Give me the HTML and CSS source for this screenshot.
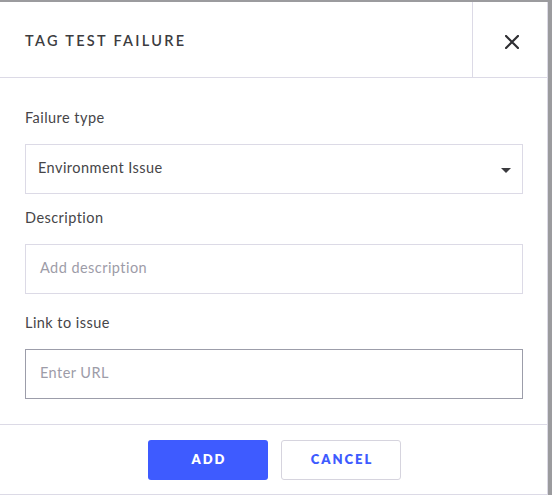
FILE: index.html
```html
<!DOCTYPE html>
<html>
<head>
<meta charset="utf-8">
<link rel="stylesheet" href="styles.css">
</head>
<body>
<div class="modal">
  <div class="modal-header">
    <div class="modal-title">TAG TEST FAILURE</div>
    <div class="close-btn">
      <svg width="14" height="14" viewBox="0 0 14 14"><path d="M1 1 L13 13 M13 1 L1 13" stroke="#2f2f33" stroke-width="2.2" stroke-linecap="square"/></svg>
    </div>
  </div>
  <div class="modal-body">
    <div class="field">
      <div class="label">Failure type</div>
      <div class="control select">
        <span class="value">Environment Issue</span>
        <span class="caret"></span>
      </div>
    </div>
    <div class="field">
      <div class="label">Description</div>
      <div class="control"><span class="placeholder">Add description</span></div>
    </div>
    <div class="field field-link">
      <div class="label">Link to issue</div>
      <div class="control focused"><span class="placeholder">Enter URL</span></div>
    </div>
  </div>
  <div class="modal-footer">
    <button class="btn btn-primary">ADD</button>
    <button class="btn btn-secondary">CANCEL</button>
  </div>
</div>
</body>
</html>
```

FILE: styles.css
```css
html, body {
  margin: 0;
  padding: 0;
}
body {
  background: #9b9b9e;
  font-family: Lato, "Open Sans", sans-serif;
  height: 495px;
  overflow: hidden;
}
.modal {
  margin-top: 2px;
  width: 547px;
  height: 492px;
  background: #fff;
  border-right: 1px solid #dcdae6;
  border-bottom: 1px solid #dcdae6;
  display: flex;
  flex-direction: column;
}
.modal-header {
  height: 75px;
  border-bottom: 1px solid #dcdae6;
  display: flex;
  align-items: stretch;
}
.modal-title {
  flex: 1;
  display: flex;
  align-items: center;
  padding-left: 25px;
  padding-top: 2px;
  font-size: 14.5px;
  font-weight: 600;
  letter-spacing: 2.3px;
  color: #3c3c40;
}
.close-btn {
  box-sizing: border-box;
  width: 75px;
  border-left: 1px solid #dcdae6;
  display: flex;
  align-items: center;
  justify-content: center;
  padding-top: 4px;
  padding-left: 3px;
}
.modal-body {
  padding: 30px 25px 25px 25px;
  display: flex;
  flex-direction: column;
  gap: 14px;
}
.field-link {
  margin-top: 5px;
}
.label {
  font-size: 14.5px;
  letter-spacing: 0.45px;
  line-height: 20px;
  color: #464548;
  margin-bottom: 16px;
}
.control {
  box-sizing: border-box;
  height: 50px;
  width: 498px;
  border: 1px solid #dcdae6;
  display: flex;
  align-items: center;
  padding-left: 14px;
  padding-bottom: 3px;
  font-size: 14.5px;
  letter-spacing: 0.45px;
}
.control.focused {
  border-color: #9c9daa;
}
.select {
  padding-left: 12px;
  justify-content: space-between;
}
.value {
  color: #464548;
}
.placeholder {
  color: #9d9ca8;
}
.caret {
  width: 0;
  height: 0;
  border-left: 5px solid transparent;
  border-right: 5px solid transparent;
  border-top: 5px solid #3a3a3e;
  margin-right: 11px;
  margin-top: 5px;
}
.modal-footer {
  border-top: 1px solid #dcdae6;
  flex: 1;
  display: flex;
  justify-content: center;
  align-items: flex-start;
  padding-top: 15px;
  padding-left: 2px;
  gap: 13px;
}
.btn {
  width: 120px;
  height: 40px;
  border-radius: 3px;
  font-family: Lato, sans-serif;
  font-size: 13px;
  font-weight: 800;
  letter-spacing: 2px;
  padding: 0 0 2px 2px;
  cursor: pointer;
}
.btn-primary {
  background: #3e5bff;
  border: none;
  color: #fff;
}
.btn-secondary {
  background: #fff;
  border: 1px solid #d6d4de;
  color: #3e5bff;
}
```
